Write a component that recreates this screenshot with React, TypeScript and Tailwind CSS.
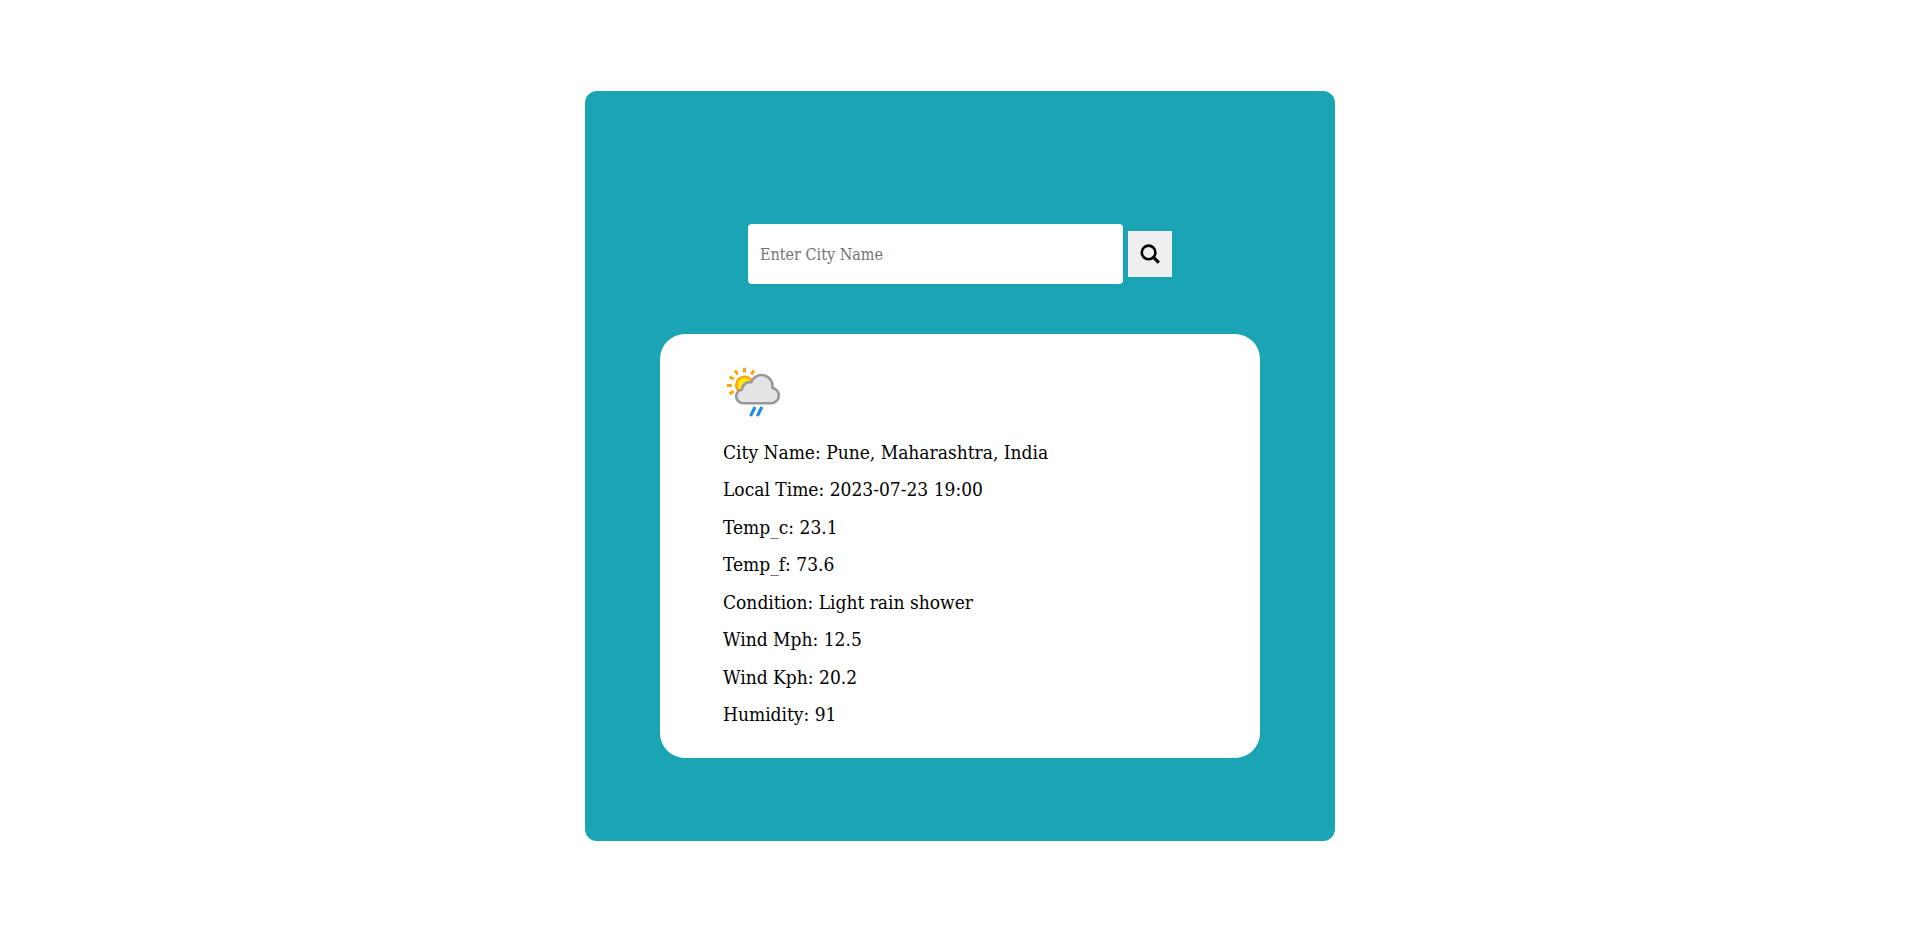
const readings: [string, string][] = [
  ["City Name", "Pune, Maharashtra, India"],
  ["Local Time", "2023-07-23 19:00"],
  ["Temp_c", "23.1"],
  ["Temp_f", "73.6"],
  ["Condition", "Light rain shower"],
  ["Wind Mph", "12.5"],
  ["Wind Kph", "20.2"],
  ["Humidity", "91"],
];

function SearchIcon() {
  return (
    <svg viewBox="0 0 20 20" className="size-5" fill="none" stroke="#000" aria-hidden="true">
      <circle cx="8.6" cy="8.4" r="6.8" strokeWidth="2.6" />
      <path d="M12.8 12.6L18.8 18.6" strokeWidth="3.2" />
    </svg>
  );
}

function LightRainShowerIcon() {
  return (
    <svg viewBox="1 0 64 64" className="size-16" fill="none" role="img" aria-label="Light rain shower">
      <path
        d="M22.5 8.7v4.8M13.2 11.2l2.4 4.2M31.8 11.2l-2.4 4.2M7.5 17.7l4.2 2.5M5 26.5h4.800M7.5 34.9l4.2-2.5"
        stroke="#FFA60A"
        strokeWidth="3"
      />
      <circle cx="22.7" cy="26.2" r="8.5" fill="#FFEB00" stroke="#FFA60A" strokeWidth="2.6" />
      <path
        d="M21 44.200a6.900 6.900 0 0 1-1-13.700a7.800 7.800 0 0 1 9.300-7.200a10.900 10.900 0 0 1 21 5.600a7.700 7.700 0 0 1-1.500 15.300z"
        fill="#E4E4E6"
        stroke="#989898"
        strokeWidth="2.6"
        strokeLinejoin="round"
      />
      <path d="M33 48l-4.400 9M39.800 48l-4.400 9" stroke="#1E88E5" strokeWidth="3" />
    </svg>
  );
}

export default function App() {
  return (
    <main className="flex min-h-screen items-center justify-center bg-white font-['DejaVu_Serif_Condensed','DejaVu_Serif',serif] text-black">
      <section className="flex min-h-[750px] w-full max-w-[750px] flex-col items-center justify-center gap-[50px] rounded-xl bg-[#1ba4b3] px-4 pt-[50px]">
        <form className="flex items-center gap-[5px]" onSubmit={(e) => e.preventDefault()}>
          <input
            type="text"
            aria-label="City name"
            placeholder="Enter City Name"
            className="h-[60px] w-[375px] rounded bg-white px-3 text-base placeholder:text-[#757575] placeholder:opacity-100"
          />
          <button
            type="submit"
            aria-label="Search"
            className="flex h-[46px] w-11 items-center justify-center bg-[#efefef]"
          >
            <SearchIcon />
          </button>
        </form>
        <article className="w-full max-w-[600px] rounded-[25px] bg-white px-[63px] py-[25px]">
          <LightRainShowerIcon />
          <ul className="mt-[10px] grid min-h-[300px] auto-rows-fr items-center text-[19px] leading-6">
            {readings.map(([label, value]) => (
              <li key={label}>
                {label}: {value}
              </li>
            ))}
          </ul>
        </article>
      </section>
    </main>
  );
}
